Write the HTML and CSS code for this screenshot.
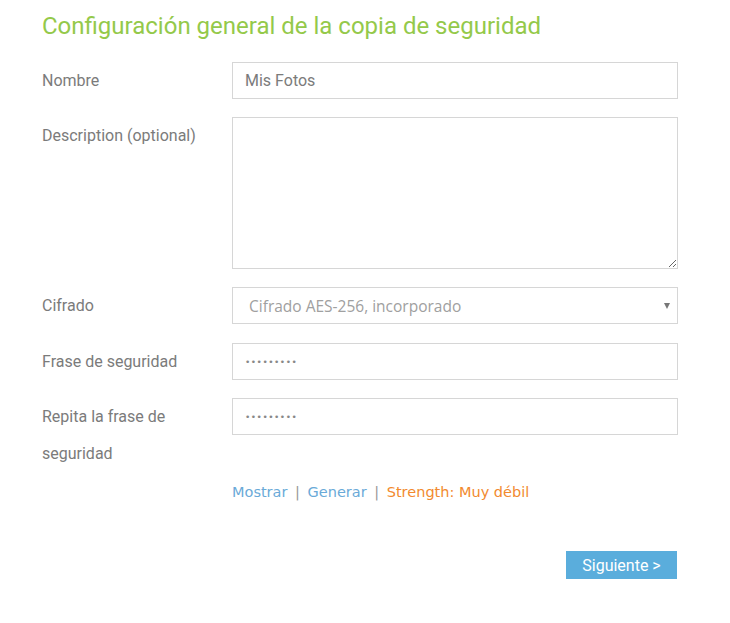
FILE: index.html
```html
<!DOCTYPE html>
<html lang="es">
<head>
    <meta charset="UTF-8">
    <title>Copia de seguridad</title>
    <link rel="stylesheet" href="styles.css">
</head>
<body>
    <div class="wizard">
        <h2>Configuración general de la copia de seguridad</h2>
        <form class="settings">
            <div class="row">
                <label for="name">Nombre</label>
                <input type="text" id="name" value="Mis Fotos">
            </div>
            <div class="row">
                <label for="desc">Description (optional)</label>
                <textarea id="desc"></textarea>
            </div>
            <div class="row">
                <label for="cipher">Cifrado</label>
                <div class="select-wrap">
                    <select id="cipher">
                        <option>Cifrado AES-256, incorporado</option>
                    </select>
                </div>
            </div>
            <div class="row pass-row">
                <label for="pass">Frase de seguridad</label>
                <input type="password" id="pass" value="123456789">
            </div>
            <div class="row">
                <label for="pass2" class="tall">Repita la frase de seguridad</label>
                <input type="password" id="pass2" value="123456789">
            </div>
            <div class="row">
                <span></span>
                <div class="pass-tools">
                    <a href="#">Mostrar</a>
                    <span class="sep">|</span>
                    <a href="#">Generar</a>
                    <span class="sep">|</span>
                    <span class="strength">Strength: Muy débil</span>
                </div>
            </div>
            <div class="actions">
                <button type="submit">Siguiente &gt;</button>
            </div>
        </form>
    </div>
</body>
</html>
```

FILE: styles.css
```css
body {
    margin: 0;
    background: white;
    font-family: "Roboto", sans-serif;
}

.wizard {
    padding: 10px 0 0 42px;
    width: 636px;
}

h2 {
    margin: 0 0 20px;
    font-family: "Roboto", sans-serif;
    font-weight: 400;
    font-size: 24px;
    line-height: 32px;
    color: #94c94a;
}

.settings {
    display: flex;
    flex-direction: column;
    gap: 18px;
}

.row {
    display: grid;
    grid-template-columns: 190px 446px;
}

.pass-row {
    margin-top: 1px;
}

label {
    font-size: 16px;
    line-height: 37px;
    color: #7b7b7b;
}

label.tall {
    width: 140px;
}

input, select, textarea {
    box-sizing: border-box;
    width: 100%;
    height: 37px;
    margin: 0;
    padding: 0 12px;
    border: 1px solid #d6d6d6;
    border-radius: 0;
    font-family: "Roboto", sans-serif;
    font-size: 16px;
    color: #7b7b7b;
    background: white;
    outline: none;
}

input[type="password"] {
    font-family: "DejaVu Sans", sans-serif;
    font-size: 9px;
    letter-spacing: 0.5px;
    color: #888;
}

textarea {
    height: 152px;
    resize: vertical;
}

.select-wrap {
    position: relative;
}

select {
    appearance: none;
    padding-left: 16px;
    font-family: "Open Sans", sans-serif;
    font-size: 15.5px;
    color: #a0a0a0;
}

.select-wrap::after {
    content: "";
    position: absolute;
    right: 8px;
    top: 16px;
    border-left: 3px solid transparent;
    border-right: 3px solid transparent;
    border-top: 6px solid #777;
}

.pass-tools {
    margin-top: -8px;
    font-family: "DejaVu Sans", sans-serif;
    font-size: 14.5px;
    line-height: 20px;
}

.pass-tools a {
    color: #6aaad8;
    text-decoration: none;
}

.sep {
    color: #999;
    margin: 0 3px;
}

.strength {
    color: #f28a2e;
}

.actions {
    display: flex;
    justify-content: flex-end;
    width: 635px;
    margin-top: 31px;
}

button {
    width: 111px;
    height: 28px;
    border: none;
    background: #5aaddc;
    color: white;
    font-family: "Roboto", sans-serif;
    font-size: 16px;
    cursor: pointer;
}
```
